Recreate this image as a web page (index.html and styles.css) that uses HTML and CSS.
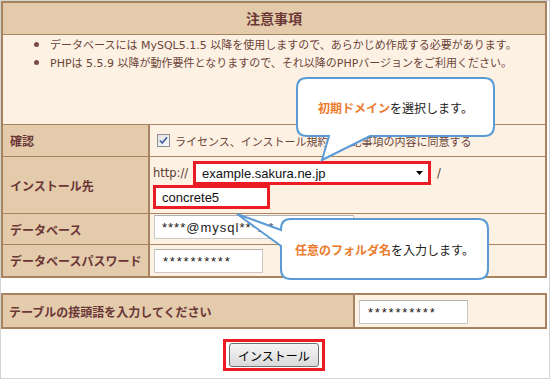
FILE: index.html
```html
<!DOCTYPE html>
<html lang="ja">
<head>
  <meta charset="UTF-8">
  <title>インストール</title>
  <link rel="stylesheet" href="styles.css">
</head>
<body>
  <div class="frame">
    <div class="panel">
      <div class="panel-head">注意事項</div>
      <ul class="notes">
        <li>データベースには MySQL5.1.5 以降を使用しますので、あらかじめ作成する必要があります。</li>
        <li>PHPは 5.5.9 以降が動作要件となりますので、それ以降のPHPバージョンをご利用ください。</li>
      </ul>

      <!-- 確認 -->
      <div class="row row-confirm">
        <div class="label">確認</div>
        <div class="value">
          <svg class="check" width="13" height="13" viewBox="0 0 13 13">
            <defs>
              <linearGradient id="cb" x1="0" y1="0" x2="1" y2="1">
                <stop offset="0" stop-color="#dcdcdc"/>
                <stop offset="1" stop-color="#ffffff"/>
              </linearGradient>
            </defs>
            <rect x="0.5" y="0.5" width="12" height="12" fill="url(#cb)" stroke="#8e8f8f"/>
            <path d="M3 6.5 L5.3 9 L10 3.3" fill="none" stroke="#4862a3" stroke-width="1.8"/>
          </svg>
          <span class="agree">ライセンス、インストール規約、上記事項の内容に同意する</span>
        </div>
      </div>

      <!-- インストール先 -->
      <div class="row row-dest">
        <div class="label">インストール先</div>
        <div class="value value-dest">
          <div class="dest-line">
            <span class="http">http://</span>
            <div class="mark select">
              <span>example.sakura.ne.jp</span>
              <svg width="7" height="4" viewBox="0 0 7 4"><polygon points="0,0 7,0 3.5,4" fill="#000"/></svg>
            </div>
            <span class="slash">/</span>
          </div>
          <div class="mark folder">concrete5</div>
        </div>
      </div>

      <!-- データベース -->
      <div class="row row-db">
        <div class="label">データベース</div>
        <div class="value value-db">
          <div class="field field-db">****@mysql***.**</div>
        </div>
      </div>

      <div class="row row-pw">
        <div class="label">データベースパスワード</div>
        <div class="value value-pw">
          <div class="field field-pw">**********</div>
        </div>
      </div>
    </div>

    <div class="panel panel-prefix">
      <div class="row row-prefix">
        <div class="label">テーブルの接頭語を入力してください</div>
        <div class="value value-prefix">
          <div class="field field-pw">**********</div>
        </div>
      </div>
    </div>

    <div class="actions">
      <div class="mark-btn">
        <button type="button">インストール</button>
      </div>
    </div>

    <!-- 吹き出し -->
    <svg class="callouts" width="550" height="379" viewBox="0 0 550 379">
      <path d="M307 78 H484 Q494 78 494 88 V126 Q494 136 484 136 H370 L322 160 L329 136 H307 Q297 136 297 126 V88 Q297 78 307 78 Z" fill="#fff" stroke="#5b9bd5" stroke-width="2"/>
      <path d="M291 219 H478 Q488 219 488 229 V269 Q488 279 478 279 H291 Q281 279 281 269 V246 L237 214 L281 230 V229 Q281 219 291 219 Z" fill="#fff" stroke="#5b9bd5" stroke-width="2"/>
    </svg>
    <div class="callout-text c1"><span class="em">初期ドメイン</span>を選択します。</div>
    <div class="callout-text c2"><span class="em">任意のフォルダ名</span>を入力します。</div>
  </div>
</body>
</html>
```

FILE: styles.css
```css
    body {
      margin: 0;
      font-family: "DejaVu Sans", "Noto Sans CJK JP", sans-serif;
      background: #fff;
      color: #333;
    }
    .frame {
      position: relative;
      width: 550px;
      height: 379px;
      box-sizing: border-box;
      border: 1px solid #d4d4d4;
      padding-right: 2px;
      background: #fff;
    }
    .panel {
      border: 2px solid #a7835f;
    }
    .panel-head {
      height: 31px;
      line-height: 31px;
      text-align: center;
      font-family: "Noto Sans CJK JP", sans-serif;
      font-size: 14px;
      font-weight: bold;
      color: #6a3636;
      background: #e3cbab;
      border-bottom: 1px solid #a7835f;
    }
    .notes {
      margin: 0;
      height: 89px;
      box-sizing: border-box;
      padding: 1px 0 0 47px;
      background: #fdf1e4;
      font-size: 11px;
      line-height: 17px;
      color: #6b4438;
    }
    .notes li::marker {
      color: #7b4b45;
      font-size: 15px;
    }
    .row {
      display: grid;
      grid-template-columns: 147px 1fr;
      border-top: 1px solid #a7835f;
    }
    .label {
      display: flex;
      align-items: center;
      padding-left: 7px;
      background: #e3cbab;
      border-right: 2px solid #a7835f;
      font-family: "Noto Sans CJK JP", sans-serif;
      font-size: 12px;
      font-weight: bold;
      color: #6a3636;
    }
    .value {
      display: flex;
      align-items: center;
      padding-left: 4px;
      background: #fdf1e4;
    }
    .row-confirm { height: 31px; }
    .row-dest { height: 56px; }
    .row-db { height: 30px; }
    .row-pw { height: 31px; }

    .row-confirm .value {
      padding-left: 7px;
    }
    .check {
      flex: none;
    }
    .agree {
      margin-left: 5px;
      font-family: "Noto Sans CJK JP", sans-serif;
      font-size: 11px;
      color: #6b4438;
    }

    .value-dest {
      flex-direction: column;
      align-items: flex-start;
      padding-left: 3px;
      padding-top: 4px;
    }
    .dest-line {
      display: flex;
      align-items: center;
    }
    .http {
      width: 40px;
      font-size: 11.5px;
      color: #5a3a32;
    }
    .slash {
      margin-left: 6px;
      font-size: 11.5px;
      color: #5a3a32;
    }
    .mark {
      box-sizing: border-box;
      height: 24px;
      border: 3px solid #ec1c24;
      background: #fff;
      font-family: "Liberation Sans", Arial, sans-serif;
      font-size: 13px;
      color: #111;
      display: flex;
      align-items: center;
      padding-left: 6px;
    }
    .select {
      width: 238px;
      justify-content: space-between;
      padding-right: 5px;
    }
    .folder {
      width: 117px;
    }

    .value-db, .value-pw, .value-prefix {
      align-items: flex-start;
    }
    .value-db { padding-top: 1px; }
    .value-pw { padding-top: 4px; }
    .field {
      box-sizing: border-box;
      height: 24px;
      border: 1px solid #c8c8c8;
      border-top-color: #b0b0b0;
      background: #fff;
      display: flex;
      align-items: center;
      padding-left: 7px;
      font-family: "Liberation Sans", Arial, sans-serif;
      font-size: 13px;
      color: #1a1a1a;
    }
    .field-db {
      width: 200px;
      letter-spacing: 1px;
    }
    .field-pw {
      width: 109px;
      letter-spacing: 1.8px;
      padding-left: 8px;
    }

    .panel-prefix {
      margin-top: 15px;
    }
    .row-prefix {
      height: 32px;
      border-top: none;
      grid-template-columns: 352px 1fr;
    }
    .row-prefix .label {
      padding-left: 6px;
    }
    .value-prefix {
      padding-top: 5px;
    }

    .actions {
      display: flex;
      justify-content: center;
      padding-top: 10px;
    }
    .mark-btn {
      border: 3px solid #ec1c24;
      padding: 1px 3px;
    }
    .mark-btn button {
      display: block;
      width: 90px;
      height: 24px;
      padding: 0;
      border: 1px solid #707070;
      border-radius: 3px;
      background: linear-gradient(#f5f5f5, #dadada);
      font-family: "Noto Sans CJK JP", sans-serif;
      font-size: 12px;
      color: #000;
    }

    .callouts {
      position: absolute;
      left: -1px;
      top: -1px;
      pointer-events: none;
    }
    .callout-text {
      position: absolute;
      display: flex;
      align-items: center;
      justify-content: center;
      font-family: "Noto Sans CJK JP", sans-serif;
      font-size: 12px;
      color: #222;
    }
    .c1 {
      left: 295px;
      top: 76px;
      width: 199px;
      height: 60px;
    }
    .c2 {
      left: 279px;
      top: 217px;
      width: 209px;
      height: 62px;
    }
    .em {
      color: #eb7b2c;
      font-weight: bold;
    }
```
